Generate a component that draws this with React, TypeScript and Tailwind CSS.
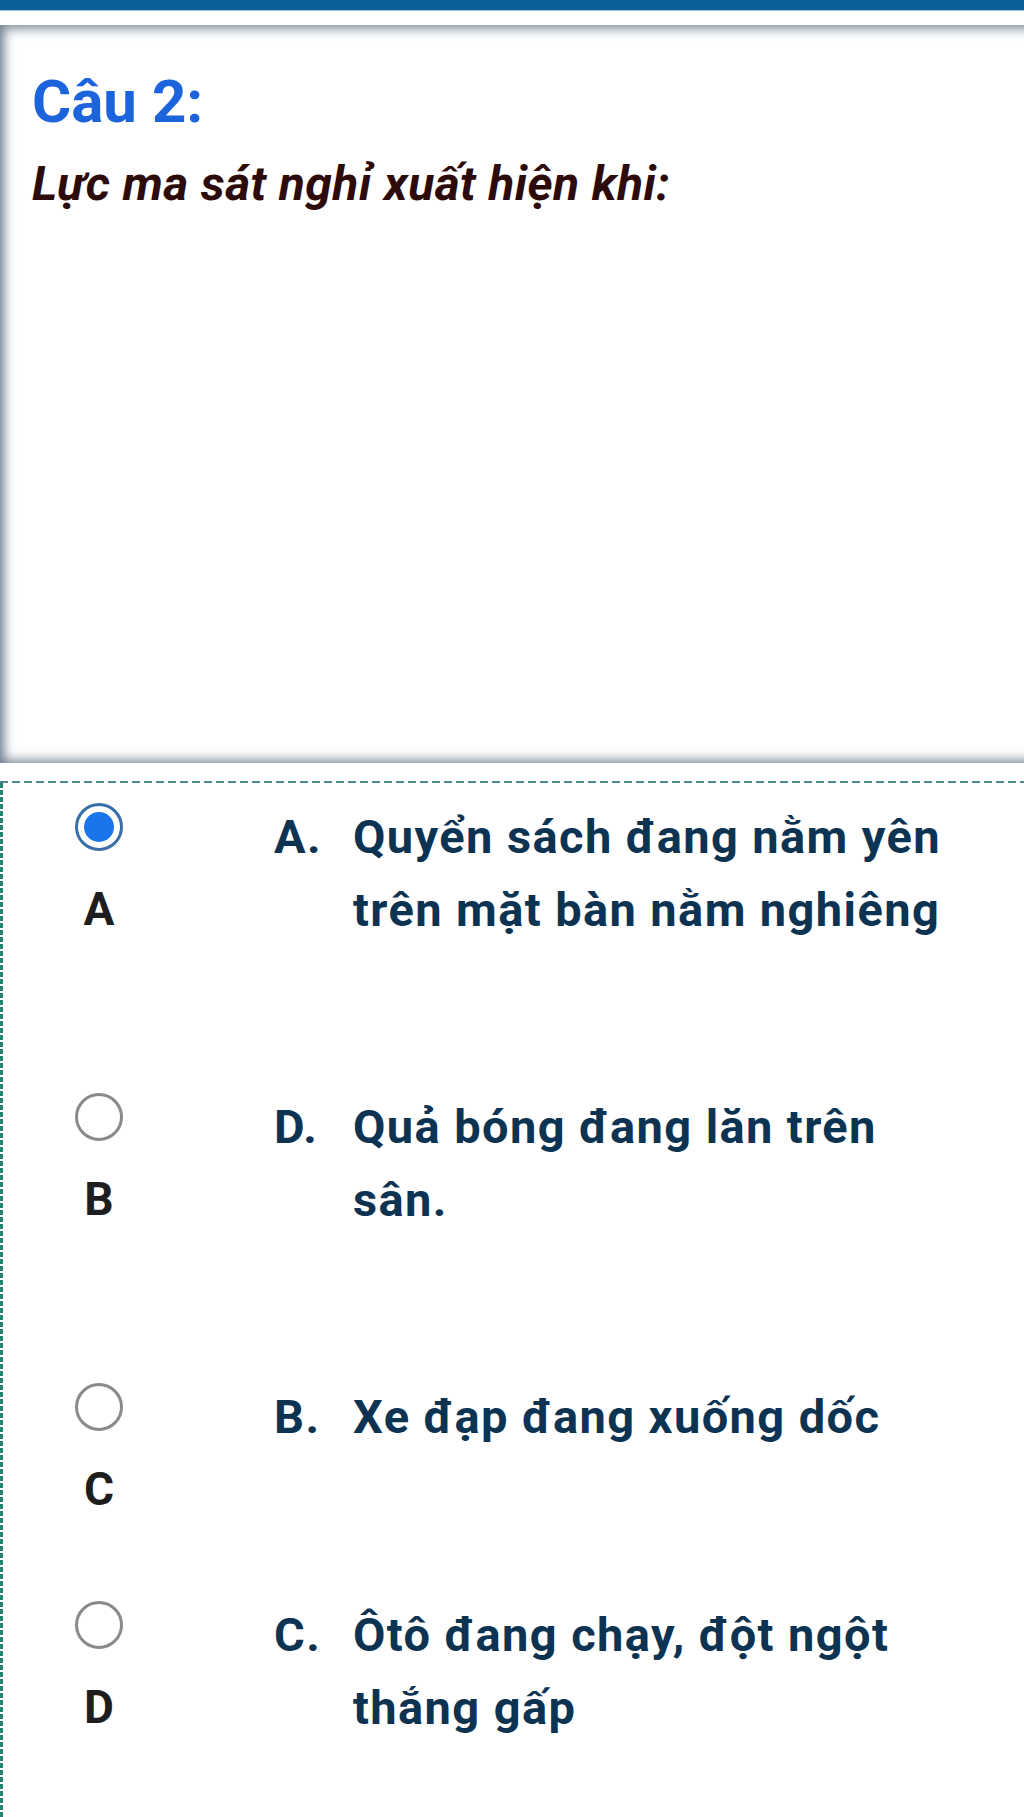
import React from 'react';

interface OptionProps {
    mark: string;
    label: string;
    lines: string[];
    selected?: boolean;
    heightClass: string;
}

const Radio: React.FC<{ selected?: boolean }> = ({ selected }) => {
    if (selected) {
        return (
            <div className="flex h-12 w-12 items-center justify-center rounded-full border-[3px] border-[#3a6ea9] bg-white">
                <div className="h-[30px] w-[30px] rounded-full bg-[#1a74ec]" />
            </div>
        );
    }
    return <div className="h-12 w-12 rounded-full border-[3px] border-[#8a8a8a] bg-white" />;
};

const Option: React.FC<OptionProps> = ({ mark, label, lines, selected, heightClass }) => {
    return (
        <div className={`flex ${heightClass}`}>
            {/* radio + letter */}
            <div className="flex w-[192px] flex-col items-center pt-[3px]">
                <Radio selected={selected} />
                <span className="mt-[22px] text-[46px] leading-[73px] font-bold text-[#1e1e1e]">{label}</span>
            </div>

            {/* answer text */}
            <div className="ml-[79px] flex text-[47px] leading-[73px] font-bold tracking-[1.4px] text-[#0d3352]">
                <span className="w-[79px]">{mark}</span>
                <div>
                    {lines.map((line) => (
                        <div key={line} className="whitespace-nowrap">
                            {line}
                        </div>
                    ))}
                </div>
            </div>
        </div>
    );
};

const App: React.FC = () => {
    return (
        <div className="min-h-screen w-full overflow-hidden bg-white font-['Roboto','Liberation_Sans',sans-serif]">
            {/* top bar */}
            <div className="h-[10px] bg-[#0c5f99]" />
            <div className="h-px bg-[#9cc2dc]" />
            <div className="h-[14px]" />

            {/* question card */}
            <div className="h-[738px] w-[calc(100%+40px)] pt-[42px] pl-8 shadow-[inset_4px_4px_12px_rgba(60,85,105,0.6),inset_0_-4px_11px_rgba(60,85,105,0.5)]">
                <h2 className="text-[60px] leading-[70px] font-bold text-[#1b64dc]">Câu 2:</h2>
                <p className="mt-5 text-[48px] leading-[54px] font-bold tracking-[0.4px] text-[#2e0b0b] italic">
                    Lực ma sát nghỉ xuất hiện khi:
                </p>
            </div>

            <div className="h-[18px]" />

            {/* answers */}
            <div className="h-[2px] bg-[repeating-linear-gradient(90deg,#4f8a8e_0_8px,transparent_8px_12px)]" />
            <div className="flex">
                <div className="w-[3px] self-stretch bg-[repeating-linear-gradient(180deg,#2a7f74_0_5px,transparent_5px_7px)]" />
                <div className="flex-1 pt-[17px]">
                    <Option mark="A." label="A" lines={['Quyển sách đang nằm yên', 'trên mặt bàn nằm nghiêng']} selected heightClass="h-[290px]" />
                    <Option mark="D." label="B" lines={['Quả bóng đang lăn trên', 'sân.']} heightClass="h-[290px]" />
                    <Option mark="B." label="C" lines={['Xe đạp đang xuống dốc']} heightClass="h-[218px]" />
                    <Option mark="C." label="D" lines={['Ôtô đang chạy, đột ngột', 'thắng gấp']} heightClass="h-[219px]" />
                </div>
            </div>
        </div>
    );
};

export default App;
